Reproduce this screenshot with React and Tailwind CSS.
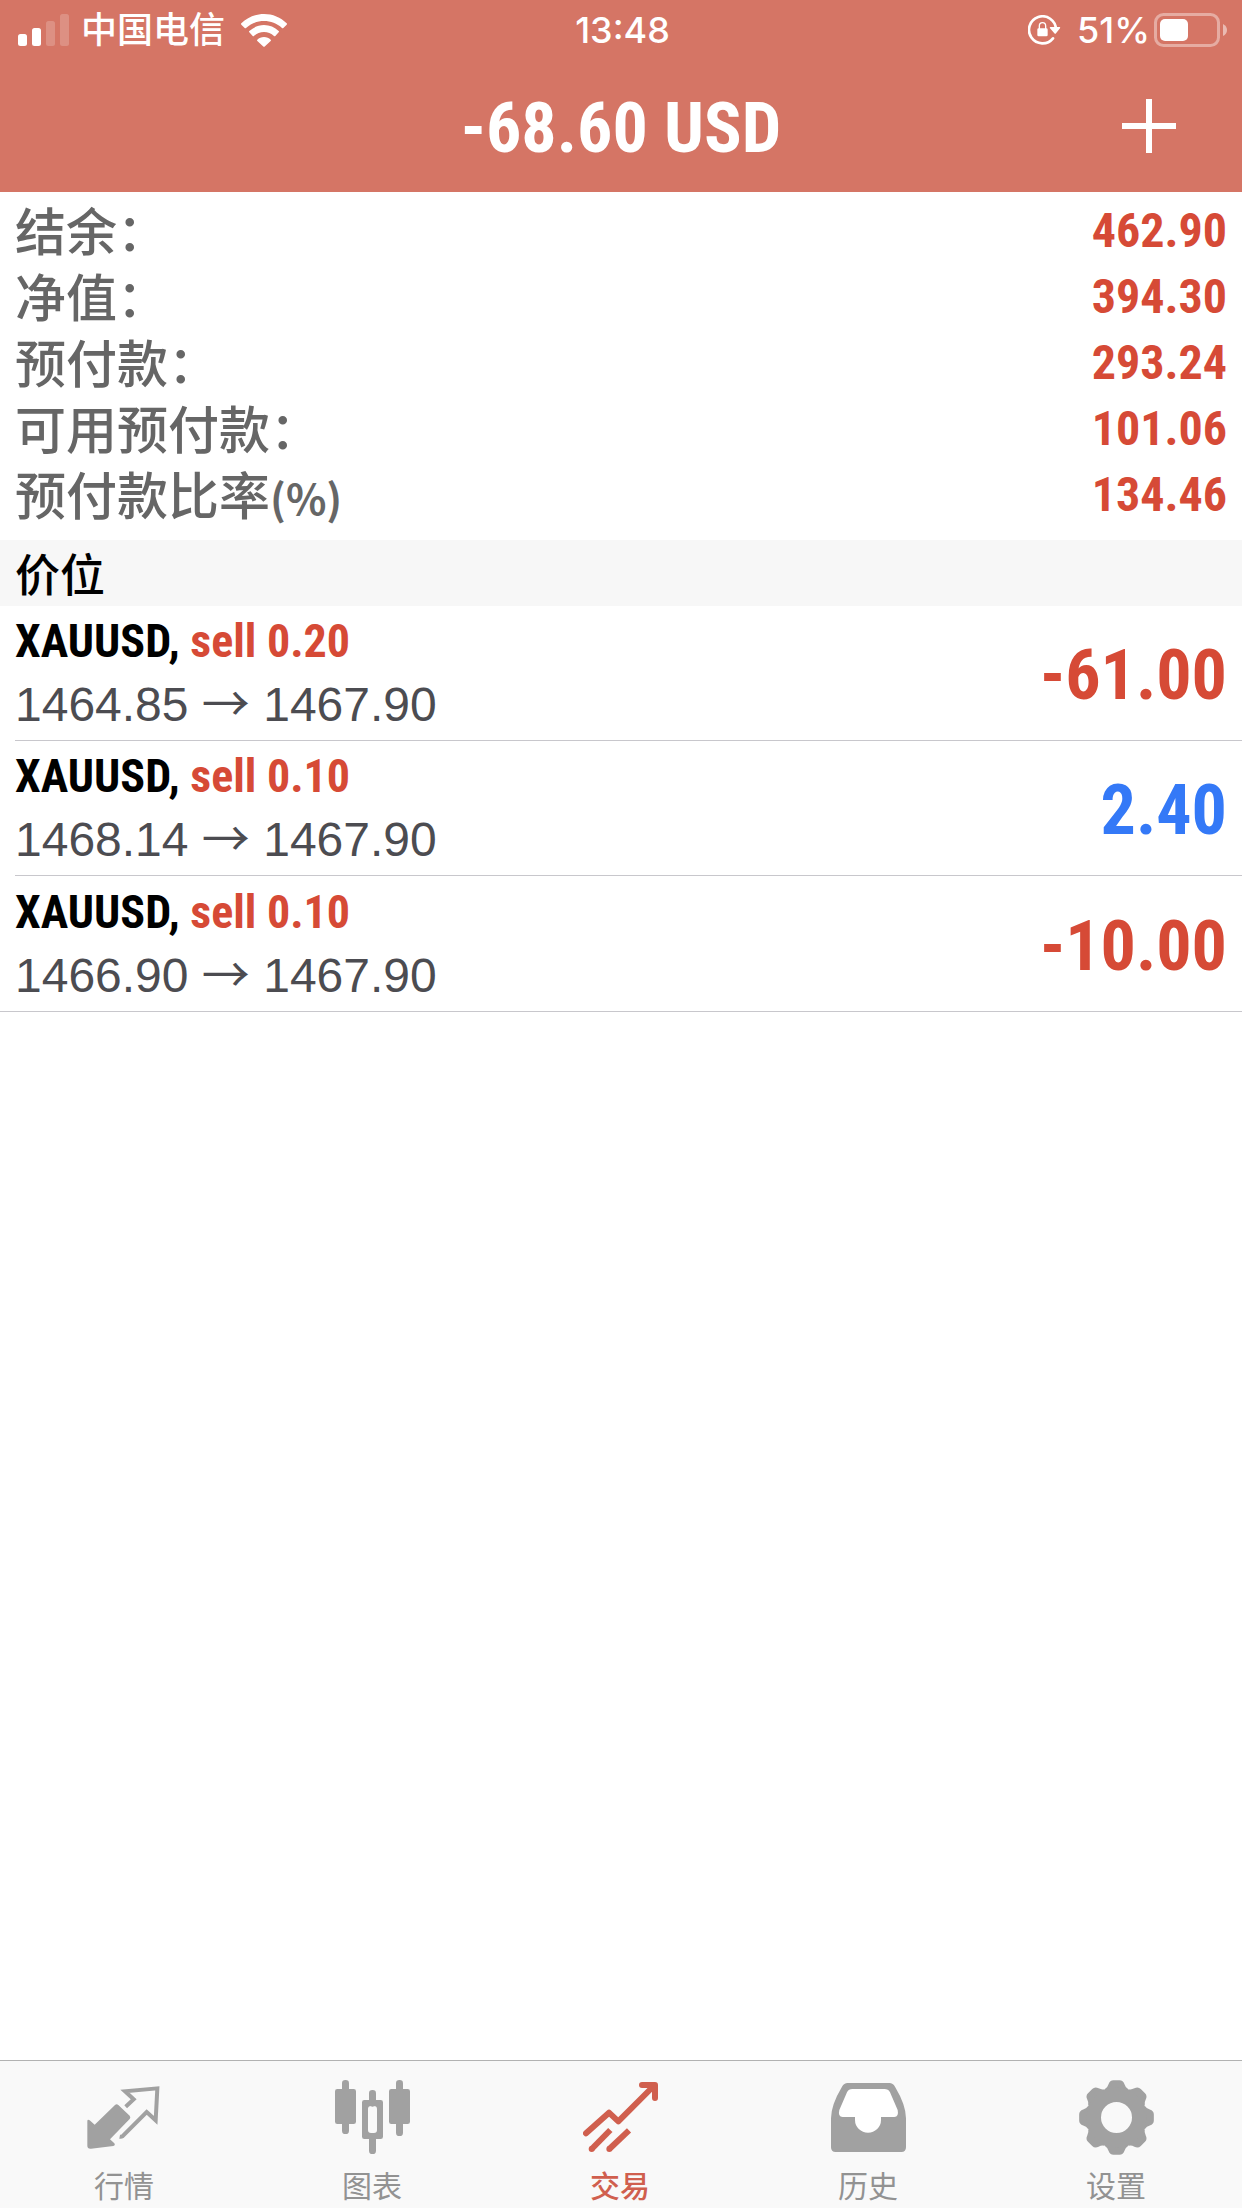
const SANS = "font-['Liberation_Sans','Noto_Sans_CJK_SC',sans-serif]"
const CJK = "font-['Noto_Sans_CJK_SC',sans-serif]"
const NARROW = "font-['Roboto_Condensed','Liberation_Sans',sans-serif]"

const summary = [
  { label: '结余：', value: '462.90' },
  { label: '净值：', value: '394.30' },
  { label: '预付款：', value: '293.24' },
  { label: '可用预付款：', value: '101.06' },
  { label: '预付款比率', unit: '(%)', value: '134.46' },
]

const positions = [
  { id: 1, symbol: 'XAUUSD', side: 'sell 0.20', open: '1464.85', now: '1467.90', profit: '-61.00' },
  { id: 2, symbol: 'XAUUSD', side: 'sell 0.10', open: '1468.14', now: '1467.90', profit: '2.40' },
  { id: 3, symbol: 'XAUUSD', side: 'sell 0.10', open: '1466.90', now: '1467.90', profit: '-10.00' },
]

function SignalIcon() {
  return (
    <svg width="51" height="32" viewBox="0 0 51 32" fill="currentColor" aria-hidden="true">
      <rect x="0" y="20" width="9" height="12" rx="2.5" />
      <rect x="14" y="14" width="9" height="18" rx="2.5" />
      <rect x="28" y="7" width="9" height="25" rx="2.5" opacity="0.2" />
      <rect x="42" y="0" width="9" height="32" rx="2.5" opacity="0.2" />
    </svg>
  )
}

function WifiIcon() {
  return (
    <svg width="46" height="33" viewBox="0 0 138 99" fill="currentColor" className="ml-1" aria-hidden="true">
      <path d="M69 0C43 0 19 10 1 28Q-1 30 1 32L11 42Q13 44 15 42C30 28 49 21 69 21S108 28 123 42Q125 44 127 42L137 32Q139 30 137 28C119 10 95 0 69 0Z" />
      <path d="M69 33C52 33 37 40 25 51Q23 53 25 55L35 66Q37 68 39 66C47 58 58 54 69 54S91 58 99 66Q101 68 103 66L113 55Q115 53 113 51C101 40 86 33 69 33Z" />
      <path d="M69 69C61 69 54 72 49 77Q47 79 49 81L66 97Q69 100 72 97L89 81Q91 79 89 77C84 72 77 69 69 69Z" />
    </svg>
  )
}

function RotationLockIcon() {
  return (
    <svg width="33" height="30" viewBox="0 0 99 90" fill="none" aria-hidden="true">
      <path d="M84 42A40.500 40.500 0 1 0 75 69" stroke="currentColor" strokeWidth="8" strokeLinecap="round" transform="translate(0 1)" />
      <path d="M67 36H95Q98 37 96 40L84 55Q82 58 79 55L66 40Q64 37 67 36Z" fill="currentColor" />
      <path d="M34 44V33a9.500 10 0 0 1 19 0V44" stroke="currentColor" strokeWidth="4" />
      <rect x="28" y="40" width="31" height="24" rx="4" fill="currentColor" />
    </svg>
  )
}

function BatteryIcon() {
  return (
    <svg width="73" height="34" viewBox="0 0 73 34" fill="none" aria-hidden="true">
      <rect x="1.500" y="1.500" width="63" height="31" rx="8" stroke="currentColor" strokeWidth="3" opacity="0.4" />
      <path d="M69 11Q73 13 73 17T69 23Z" fill="currentColor" opacity="0.5" />
      <rect x="6" y="6" width="28" height="22" rx="5" fill="currentColor" />
    </svg>
  )
}

function QuotesIcon() {
  return (
    <>
      <path d="M1 124Q1 117 8 121L23 134L84 75Q89 70 94 75L128 107Q132 112 128 117L69 178L82 190Q86 196 79 198L12 206Q1 207 1 197Z" fill="currentColor" />
      <path d="M116 80L140 58L114 34L211 25L206 121L179 96L106 169Q103 171 98 170" fill="none" stroke="currentColor" strokeWidth="12" />
    </>
  )
}

function ChartIcon() {
  return (
    <g fill="currentColor">
      <rect x="0" y="27" width="63" height="105" rx="7" />
      <rect x="21" y="0" width="21" height="162" rx="10" />
      <rect x="102" y="30" width="21" height="50" rx="10" />
      <rect x="102" y="165" width="21" height="57" rx="10" />
      <path fillRule="evenodd" d="M88 60H137Q144 60 144 67V170Q144 177 137 177H88Q81 177 81 170V67Q81 60 88 60ZM108 78Q99 78 99 87V150Q99 159 108 159H117Q126 159 126 150V87Q126 78 117 78Z" />
      <rect x="162" y="27" width="63" height="105" rx="7" />
      <rect x="183" y="0" width="21" height="168" rx="10" />
    </g>
  )
}

function TradeIcon() {
  return (
    <g fill="none" stroke="currentColor" strokeWidth="18">
      <path d="M9 160L78 98L106 124L212 18" strokeLinecap="round" strokeLinejoin="round" />
      <path d="M177 15H216V54" strokeLinecap="round" strokeLinejoin="round" />
      <path d="M26 207L82 150" />
      <path d="M79 207L138 151" />
      <circle cx="26" cy="207" r="9" fill="currentColor" stroke="none" />
      <circle cx="79" cy="207" r="9" fill="currentColor" stroke="none" />
    </g>
  )
}

function HistoryIcon() {
  return (
    <>
      <path d="M50 9H175Q186 9 192 20Q225 75 225 115V202Q225 216 211 216H14Q0 216 0 202V115Q0 75 33 20Q39 9 50 9Z" fill="currentColor" />
      <path d="M64 27H160Q172 27 177 37L200 90Q204 110 190 111H150V120A39 38 0 0 1 72 120V111H35Q20 110 25 90L48 37Q53 27 64 27Z" fill="#fff" />
    </>
  )
}

function SettingsIcon() {
  return (
    <g transform="translate(112.5 112.5)">
      {[0, 45, 90, 135, 180, 225, 270, 315].map(a => (
        <path key={a} transform={`rotate(${a})`} fill="currentColor"
          d="M-36 -78L-34 -86Q-27 -90 -24 -100Q-20 -112 -9 -112H9Q20 -112 24 -100Q27 -90 34 -86L36 -78Z" />
      ))}
      <circle r="68" fill="none" stroke="currentColor" strokeWidth="43" />
    </g>
  )
}

const tabs = [
  { key: 'quotes', label: '行情', Icon: QuotesIcon },
  { key: 'chart', label: '图表', Icon: ChartIcon },
  { key: 'trade', label: '交易', Icon: TradeIcon },
  { key: 'history', label: '历史', Icon: HistoryIcon },
  { key: 'settings', label: '设置', Icon: SettingsIcon },
]

function StatusBar() {
  return (
    <div className="grid grid-cols-3 items-center h-[60px] pl-[18px] pr-[15px] text-[36px] leading-[36px] font-['Inter','Noto_Sans_CJK_SC',sans-serif]">
      <div className="flex items-center gap-3">
        <SignalIcon />
        <span className="font-medium">中国电信</span>
        <WifiIcon />
      </div>
      <time className="text-center font-medium">13:48</time>
      <div className="flex items-center justify-end">
        <RotationLockIcon />
        <span className="ml-4 mr-1 font-medium">51%</span>
        <BatteryIcon />
      </div>
    </div>
  )
}

function PositionRow({ symbol, side, open, now, profit }) {
  const loss = profit.startsWith('-')
  return (
    <li className="group last:border-b last:border-[#c8c7cc]">
      <div className="ml-[15px] pr-[15px] h-[135px] flex items-center justify-between border-b border-[#c8c7cc] group-last:border-b-0">
        <div>
          <div className={`${NARROW} text-[46px] leading-[63px] font-bold text-black`}>
            {symbol}, <span className="text-[#d64a36]">{side}</span>
          </div>
          <div className={`${SANS} text-[48px] leading-[63px] text-[#4c4c51]`}>
            {open} <span className={`${CJK} leading-none`}>→</span> {now}
          </div>
        </div>
        <div className={`${NARROW} pt-1 text-[70px] leading-[84px] font-bold ${loss ? 'text-[#d64a36]' : 'text-[#3479f7]'}`}>
          {profit}
        </div>
      </div>
    </li>
  )
}

export default function App() {
  const active = 'trade'

  return (
    <div className={`${SANS} min-h-screen flex flex-col bg-white`}>
      <header className="bg-[#d57565] text-white">
        <StatusBar />
        <div className="grid grid-cols-[1fr_auto_1fr] items-center h-[132px]">
          <h1 className={`${NARROW} col-start-2 pt-1 text-[70px] leading-[84px] font-bold`}>-68.60 USD</h1>
          <button type="button" aria-label="新订单" className="justify-self-end mr-[66px]">
            <svg width="54" height="54" viewBox="0 0 54 54" fill="currentColor" aria-hidden="true">
              <rect x="0" y="24" width="54" height="6" />
              <rect x="24" y="0" width="6" height="54" />
            </svg>
          </button>
        </div>
      </header>

      <main className="flex-1">
        <dl className="px-[15px] pt-[6px] pb-3">
          {summary.map(s => (
            <div key={s.label} className="flex justify-between h-[66px]">
              <dt className={`${CJK} text-[51px] leading-[62px] font-medium text-[#666666]`}>
                {s.label}
                {s.unit && <span className="text-[42px] font-bold">{s.unit}</span>}
              </dt>
              <dd className={`${NARROW} text-[48px] leading-[66px] font-bold text-[#d64a36]`}>{s.value}</dd>
            </div>
          ))}
        </dl>

        <h2 className={`${CJK} bg-[#f7f7f7] px-[15px] h-[66px] text-[45px] leading-[66px] font-medium text-black`}>价位</h2>
        <ul>
          {positions.map(p => <PositionRow key={p.id} {...p} />)}
        </ul>
      </main>

      <nav className="sticky bottom-0 grid grid-cols-5 pr-0.5 bg-[#f9f9f9] border-t border-[#b2b2b2]">
        {tabs.map(({ key, label, Icon }) => (
          <a key={key} href={`#${key}`}
            className={`flex flex-col items-center gap-[11px] pt-[19px] pb-[6px] ${key === active ? 'text-[#d05f4e]' : 'text-[#a1a1a1]'}`}>
            <svg width="75" height="75" viewBox="0 0 225 225" aria-hidden="true"><Icon /></svg>
            <span className={`${CJK} text-[30px] leading-[36px] ${key === active ? 'font-medium' : 'text-[#929292]'}`}>{label}</span>
          </a>
        ))}
      </nav>
    </div>
  )
}
